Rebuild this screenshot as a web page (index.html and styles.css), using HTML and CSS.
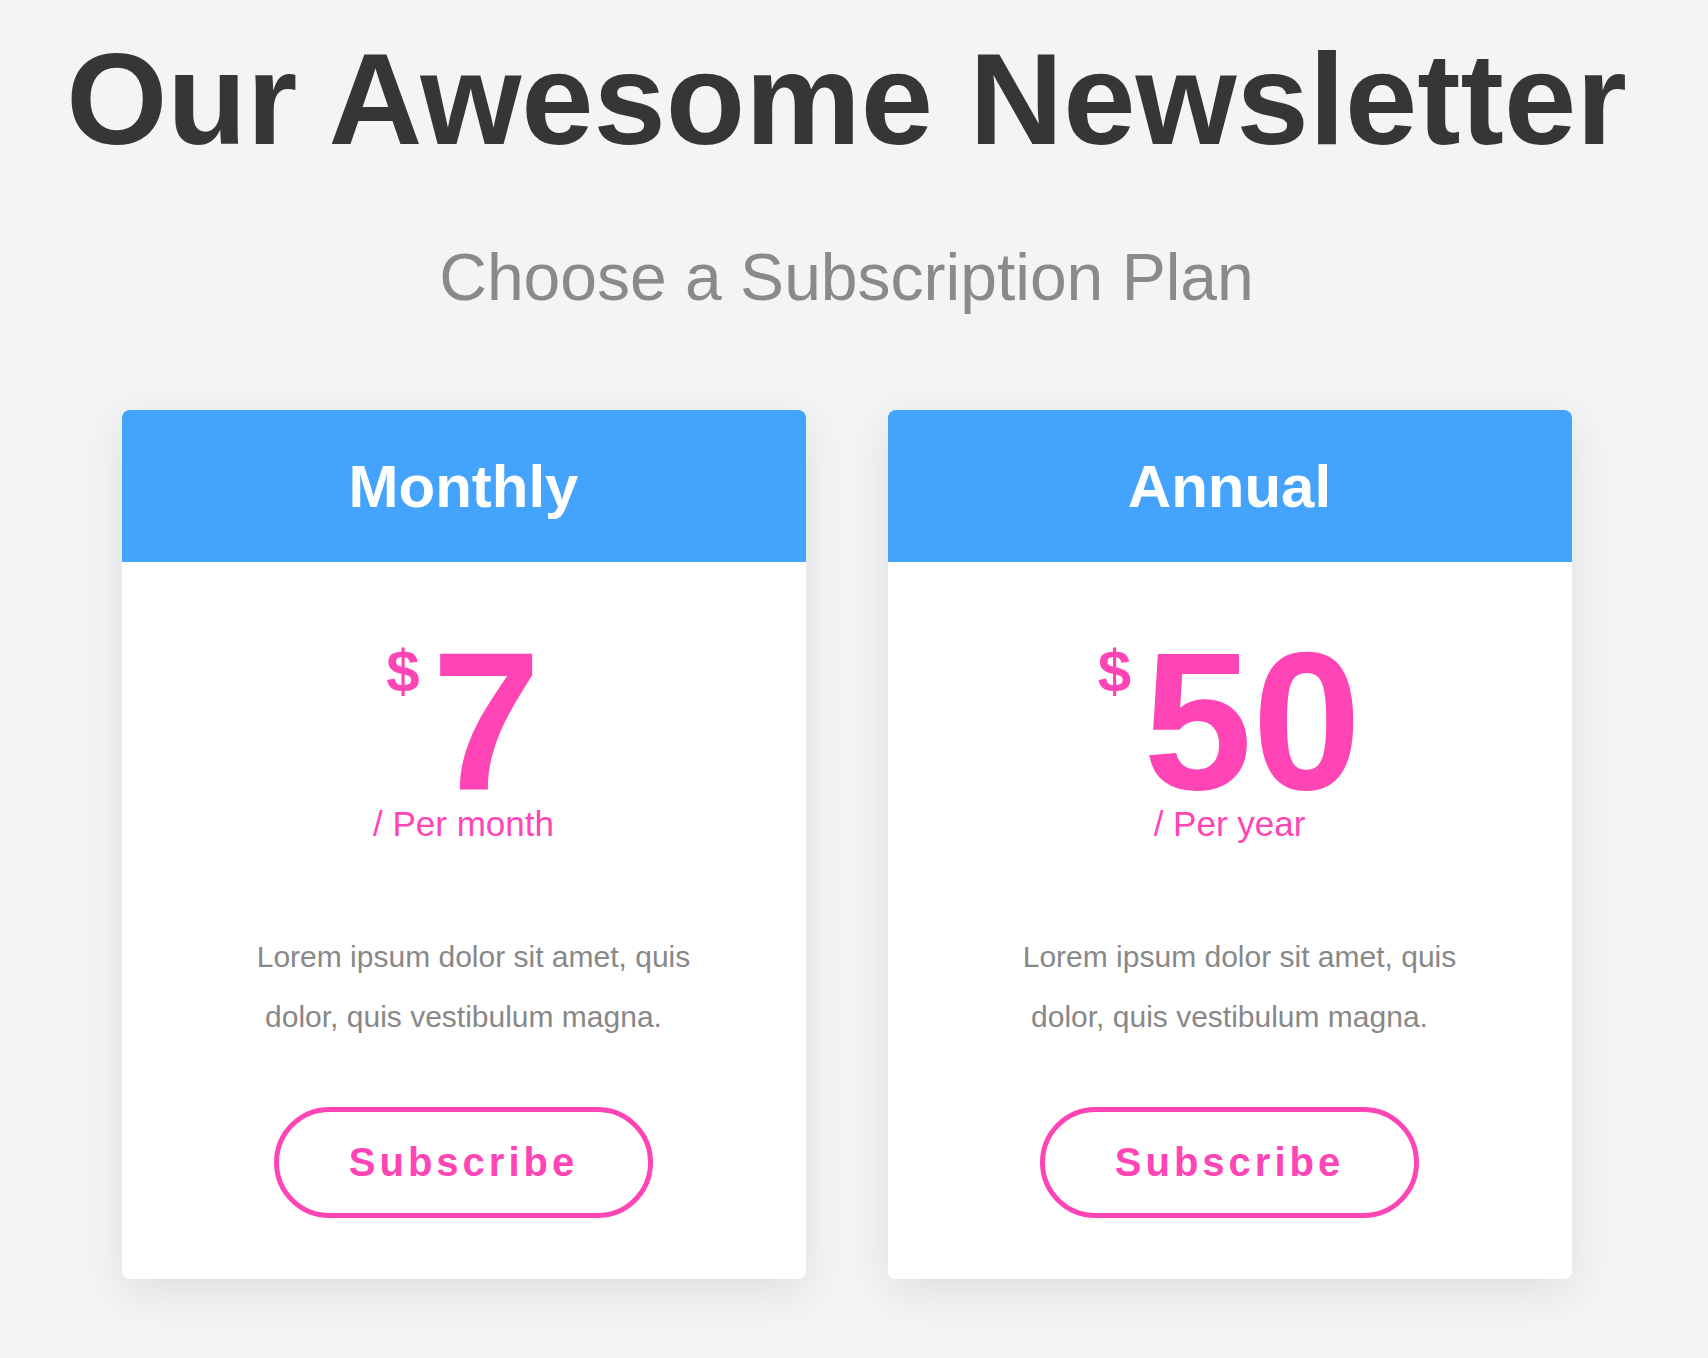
FILE: index.html
```html
<!DOCTYPE html>
<html>
<head>
    <meta charset="UTF-8">
    <title>Our Awesome Newsletter</title>
    <link rel="stylesheet" href="styles.css">
</head>
<body>
    <div class="page">
        <h1 class="title">Our Awesome Newsletter</h1>
        <h2 class="subtitle">Choose a Subscription Plan</h2>

        <div class="plans">
            <div class="plan">
                <div class="plan-header">Monthly</div>
                <div class="plan-body">
                    <div class="price">
                        <span class="currency">$</span>
                        <span class="amount">7</span>
                    </div>
                    <div class="period">/ Per month</div>
                    <p class="plan-text">Lorem ipsum dolor sit amet, quis dolor, quis vestibulum magna.</p>
                    <button type="button" class="subscribe-btn">Subscribe</button>
                </div>
            </div>

            <div class="plan">
                <div class="plan-header">Annual</div>
                <div class="plan-body">
                    <div class="price">
                        <span class="currency">$</span>
                        <span class="amount">50</span>
                    </div>
                    <div class="period">/ Per year</div>
                    <p class="plan-text">Lorem ipsum dolor sit amet, quis dolor, quis vestibulum magna.</p>
                    <button type="button" class="subscribe-btn">Subscribe</button>
                </div>
            </div>
        </div>
    </div>
</body>
</html>
```

FILE: styles.css
```css
body {
    margin: 0;
    padding-right: 15px;
    background-color: #f3f4f6;
    font-family: "Liberation Sans", Arial, sans-serif;
}
.page {
    padding-top: 31px;
    padding-bottom: 80px;
    text-align: center;
}
.title {
    margin: 0;
    font-size: 130px;
    line-height: 136px;
    font-weight: bold;
    color: #363636;
}
.subtitle {
    margin: 77px 0 0;
    font-size: 66px;
    line-height: 66px;
    font-weight: normal;
    color: #8a8a8a;
}
.plans {
    display: flex;
    justify-content: center;
    gap: 82px;
    margin-top: 100px;
}
.plan {
    width: 684px;
    background: white;
    border-radius: 8px;
    overflow: hidden;
    box-shadow: 0 12px 45px rgba(0, 0, 0, 0.09);
}
.plan-header {
    height: 152px;
    display: flex;
    align-items: center;
    justify-content: center;
    background: #44a3fc;
    color: white;
    font-size: 60px;
    font-weight: bold;
}
.plan-body {
    display: flex;
    flex-direction: column;
    align-items: center;
    padding: 80px 0 61px;
}
.price {
    display: flex;
    align-items: flex-start;
    gap: 12px;
    color: #ff45b5;
    font-weight: bold;
    line-height: 1;
}
.currency {
    font-size: 60px;
}
.amount {
    font-size: 196px;
    line-height: 160px;
}
.period {
    margin-top: 1px;
    font-size: 35px;
    line-height: 42px;
    color: #ff45b5;
}
.plan-text {
    width: 470px;
    margin: 82px 0 0;
    font-size: 30px;
    line-height: 60px;
    text-indent: 20px;
    color: #888;
}
.subscribe-btn {
    width: 379px;
    height: 111px;
    margin-top: 60px;
    background: white;
    border: 5px solid #ff45b5;
    border-radius: 56px;
    color: #ff45b5;
    font-family: inherit;
    font-size: 40px;
    font-weight: bold;
    letter-spacing: 4px;
    cursor: pointer;
}
```
